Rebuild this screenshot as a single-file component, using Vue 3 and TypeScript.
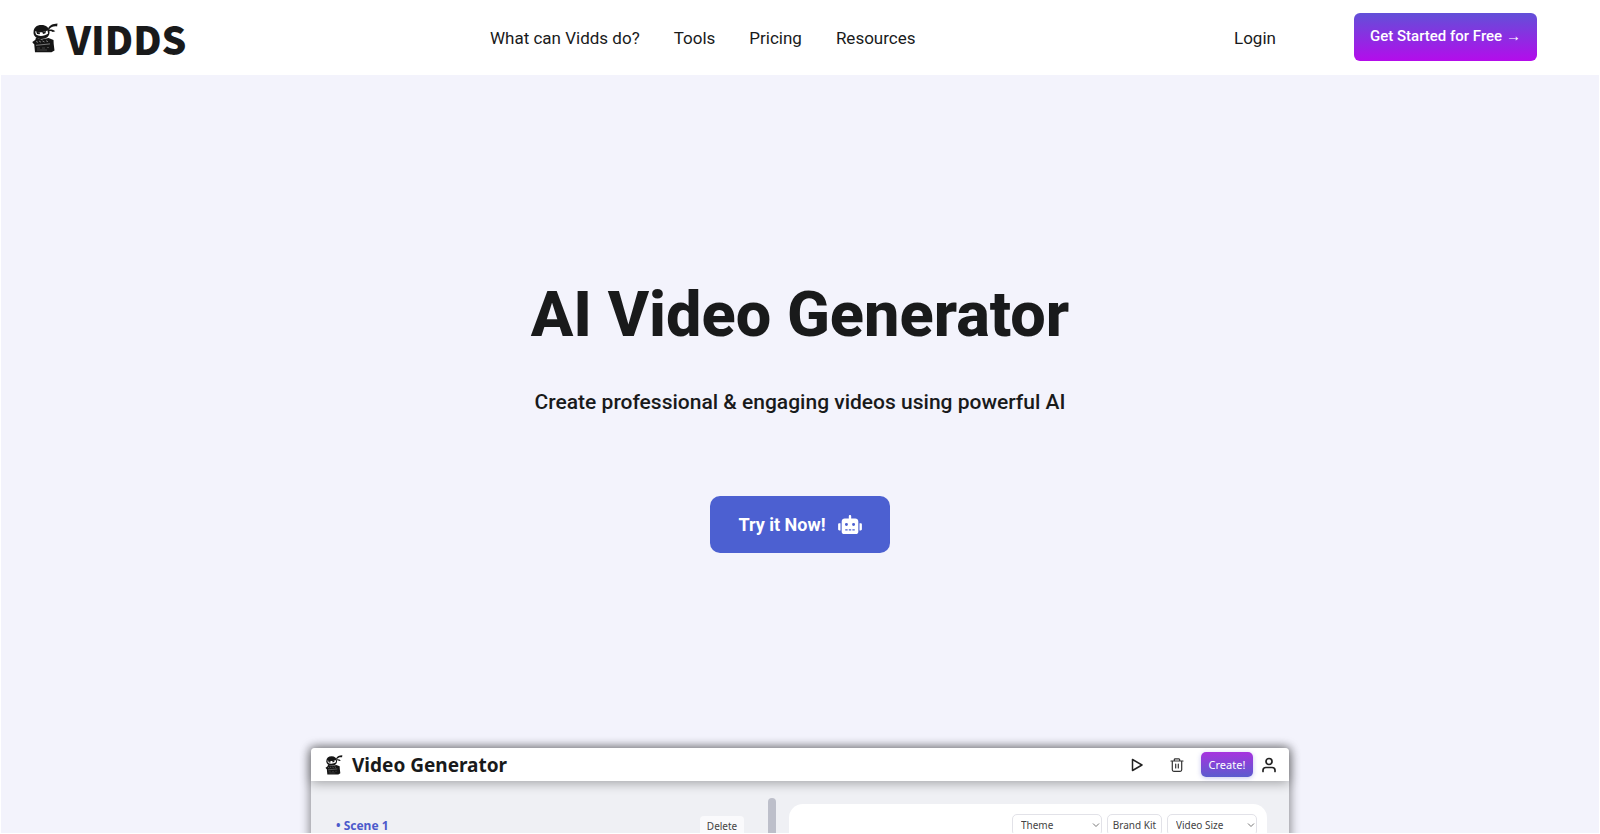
<script setup lang="ts">
import { ref } from 'vue'

const links: string[] = ['What can Vidds do?', 'Tools', 'Pricing', 'Resources']
const theme = ref('Theme')
const videoSize = ref('Video Size')
</script>

<template>
  <div class="page">
    <svg class="defs" aria-hidden="true">
      <symbol id="ninja" viewBox="0 0 26 30">
        <path d="M1.500 9.500C1.500 4.500 4.500 2 9.500 2c4.500 0 7.500 2.400 8 6.500.5 4.500-3 7.500-8 7.500-4.500 0-8-2.500-8-6.500z" fill="#151515" />
        <path d="M3 8.200c3.800 1.600 8.500 1.200 12.500-.8l.6 3.200c-3.200 2.600-9.100 3.200-12.100 1z" fill="#fff" />
        <path d="M4.200 8.800l4 .8-.6 1.700-2.500-.2zM10 9.600l4-1.500-.5 2.200-2.200.8z" fill="#151515" />
        <path d="M16 5.500C18 2 20.500.8 25.500.5l-.4 2.900c-3.700-.4-5.900.4-8.100 3zM17 6.500c2.600-.3 4.700.2 6.300 1.700l-2.500.9c-1.100-1-2.600-1.300-4-.9z" fill="#151515" />
        <path d="M4 14.500l5.500 2 7-1.600 5 2 .2 4 .8 6.600-3 1.700H3L2.200 21z" fill="#151515" />
        <path d="M.3 19l3.200-2.300 1 1.500 14-.5 1 2-15.500 2-2.800-1.200z" fill="#151515" />
        <path d="M4 18.400l2 1M7 18l2 1.200M10.500 18l2 1M14 17.700l2 1M4 22.300l14-1.400" stroke="#bbb" stroke-width=".6" />
        <path d="M5 25h3m2 0h3m2-.5h2M5 27h10" stroke="#777" stroke-width=".5" />
      </symbol>
    </svg>

    <header class="header">
      <a class="logo" href="#">
        <svg class="logo-mark" aria-hidden="true"><use href="#ninja" /></svg>
        <span>VIDDS</span>
      </a>
      <nav class="nav" aria-label="Main">
        <a v-for="link in links" :key="link" href="#">{{ link }}</a>
      </nav>
      <a class="login" href="#">Login</a>
      <div class="action"><button class="start" type="button">Get Started for Free →</button></div>
    </header>

    <main class="hero">
      <h1>AI Video Generator</h1>
      <p class="tagline">Create professional &amp; engaging videos using powerful AI</p>
      <button class="try" type="button">
        <span>Try it Now!</span>
        <svg class="robot" viewBox="0 0 640 512" aria-hidden="true">
          <path fill="currentColor" fill-rule="evenodd" d="M32 224h32v192H32c-18 0-32-14-32-32V256c0-18 14-32 32-32zm512-48v272c0 35-29 64-64 64H160c-35 0-64-29-64-64V176c0-44 36-80 80-80h112V32c0-18 14-32 32-32s32 14 32 32v64h112c44 0 80 36 80 80zM264 256a40 40 0 1 0-80 0 40 40 0 1 0 80 0zm-8 128h-64v32h64zm96 0h-64v32h64zm104-128a40 40 0 1 0-80 0 40 40 0 1 0 80 0zm-8 128h-64v32h64zm192-128v128c0 18-14 32-32 32h-32V224h32c18 0 32 14 32 32z" />
        </svg>
      </button>

      <section class="preview" aria-label="Video Generator">
        <div class="bar">
          <svg class="bar-mark" aria-hidden="true"><use href="#ninja" /></svg>
          <h2>Video Generator</h2>
          <button class="icon" type="button" aria-label="Play">
            <svg viewBox="0 0 16 16" width="16" height="16"><path d="M3.500 2.500v11L13 8z" fill="none" stroke="#222" stroke-width="1.500" stroke-linejoin="round" /></svg>
          </button>
          <button class="icon trash" type="button" aria-label="Clear">
            <svg viewBox="0 0 16 16" width="16" height="16" fill="none" stroke="#333" stroke-width="1.200" stroke-linecap="round" stroke-linejoin="round"><path d="M2 4h12M5.300 4V2.700q0-.9.9-.9h3.600q.9 0 .9.900V4M3.300 4v8.800q0 1.500 1.500 1.500h6.400q1.500 0 1.500-1.500V4M6.700 7v4M9.300 7v4" /></svg>
          </button>
          <button class="create" type="button">Create!</button>
          <button class="icon" type="button" aria-label="Account">
            <svg viewBox="0 0 16 16" width="16" height="16" fill="none" stroke="#222" stroke-width="1.700" stroke-linecap="round"><circle cx="8" cy="4.500" r="3" /><path d="M2 14.500v-1.200q0-2.800 2.900-2.800h6.200q2.900 0 2.900 2.800v1.200" /></svg>
          </button>
        </div>
        <div class="workspace">
          <div class="scenes">
            <h3>• Scene 1</h3>
            <button class="delete" type="button">Delete</button>
          </div>
          <div class="scroll"></div>
          <div class="canvas">
            <div class="field">
              <select v-model="theme" aria-label="Theme"><option>Theme</option></select>
              <svg class="chevron" viewBox="0 0 8 6" aria-hidden="true"><path d="M1 1.500l3 3 3-3" /></svg>
            </div>
            <button class="brand" type="button">Brand Kit</button>
            <div class="field">
              <select v-model="videoSize" aria-label="Video Size"><option>Video Size</option></select>
              <svg class="chevron" viewBox="0 0 8 6" aria-hidden="true"><path d="M1 1.500l3 3 3-3" /></svg>
            </div>
          </div>
        </div>
      </section>
    </main>
  </div>
</template>

<style>
body {
  margin: 0;
  background: #fff;
}
</style>

<style scoped>
* {
  box-sizing: border-box;
}
.page {
  height: 100vh;
  overflow: hidden;
  display: flex;
  flex-direction: column;
  padding: 0 1px 1px;
  font-family: Roboto, "Liberation Sans", sans-serif;
  color: #191a1b;
}
.defs {
  position: absolute;
  width: 0;
  height: 0;
}
button {
  font: inherit;
  border: 0;
  margin: 0;
  padding: 0;
  cursor: pointer;
}
a {
  color: inherit;
  text-decoration: none;
}
.header {
  flex: none;
  height: 75px;
  display: grid;
  grid-template-columns: 489fr 744fr 120fr 245fr;
  align-items: center;
  font-size: 17px;
}
.logo {
  display: flex;
  align-items: center;
  gap: 8px;
  padding-left: 31px;
  font-family: "Noto Sans CJK JP", "Open Sans", sans-serif;
  font-weight: 900;
  font-size: 39px;
  line-height: 56px;
}
.logo-mark {
  width: 26px;
  height: 30px;
}
.nav {
  display: flex;
  gap: 34px;
}
.action {
  display: flex;
  padding-bottom: 2px;
}
.start {
  height: 48px;
  padding: 0 16px 2px;
  border-radius: 6px;
  color: #fff;
  font-size: 15px;
  font-weight: 500;
  white-space: nowrap;
  background: linear-gradient(#6250d8, #b40ceb);
}
.hero {
  flex: 1;
  min-height: 0;
  overflow: hidden;
  display: flex;
  flex-direction: column;
  align-items: center;
  padding-top: 200px;
  background: #f3f3fc;
}
h1 {
  margin: 0;
  font-size: 63px;
  font-weight: 800;
  line-height: 80px;
}
.tagline {
  margin: 32px 0 0;
  font-size: 21px;
  font-weight: 500;
  line-height: 30px;
}
.try {
  flex: none;
  display: flex;
  align-items: center;
  gap: 12px;
  height: 57px;
  margin-top: 79px;
  padding: 0 28px;
  border-radius: 10px;
  color: #fff;
  font-size: 18px;
  font-weight: 700;
  background: #4c60d1;
}
.robot {
  width: 24px;
  height: 19px;
}
.preview {
  flex: none;
  width: 61.2%;
  margin-top: 195px;
  border-radius: 4px 4px 0 0;
  background: #eff0f4;
  box-shadow: 0 0 10px 2px #0006;
  font-family: "Noto Sans", "Open Sans", sans-serif;
}
.bar {
  display: flex;
  align-items: center;
  height: 33px;
  padding: 0 12px 0 14px;
  border-radius: 4px 4px 0 0;
  background: #fff;
  box-shadow: 0 2px 12px #0005;
}
.bar-mark {
  width: 18px;
  height: 20px;
}
h2 {
  flex: 1;
  margin: 0 0 0 9px;
  font-size: 19px;
  font-weight: 700;
  line-height: 28px;
}
.icon {
  display: flex;
  background: none;
}
.trash {
  margin: 0 16px 0 24px;
}
.create {
  width: 52px;
  height: 25px;
  margin-right: 8px;
  border-radius: 5px;
  color: #fff;
  font-size: 11px;
  background: linear-gradient(#a733df, #5b5bce);
  box-shadow: 0 1px 5px #5b5bce55;
}
.workspace {
  display: flex;
  align-items: flex-start;
  height: 400px;
  padding: 17px 22px 0 25px;
}
.scenes {
  flex: 429;
  display: flex;
  align-items: center;
  justify-content: space-between;
  padding: 18px 24px 0 0;
}
h3 {
  margin: 0;
  color: #4c5acb;
  font-size: 12px;
  font-weight: 700;
  line-height: 20px;
}
.delete {
  height: 20px;
  padding: 0 7px;
  border-radius: 4px;
  color: #444;
  font-size: 10px;
  background: #fafafc;
}
.scroll {
  flex: none;
  width: 8px;
  height: 300px;
  border-radius: 4px;
  background: #bdbfca;
}
.canvas {
  flex: 481;
  height: 380px;
  display: flex;
  justify-content: flex-end;
  gap: 5px;
  margin: 6px 0 0 13px;
  padding: 10px 10px 0;
  border-radius: 14px;
  background: #fff;
}
.field {
  position: relative;
  width: 90px;
  height: 22px;
}
select,
.brand {
  height: 22px;
  border: 1px solid #e2e2e8;
  border-radius: 5px;
  color: #444;
  font-family: inherit;
  font-size: 10px;
  background: #fff;
}
select {
  display: block;
  appearance: none;
  width: 100%;
  padding: 0 8px;
}
.brand {
  width: 55px;
  white-space: nowrap;
}
.chevron {
  position: absolute;
  right: 2px;
  top: 8px;
  width: 8px;
  height: 6px;
  fill: none;
  stroke: #777;
  pointer-events: none;
}
</style>
